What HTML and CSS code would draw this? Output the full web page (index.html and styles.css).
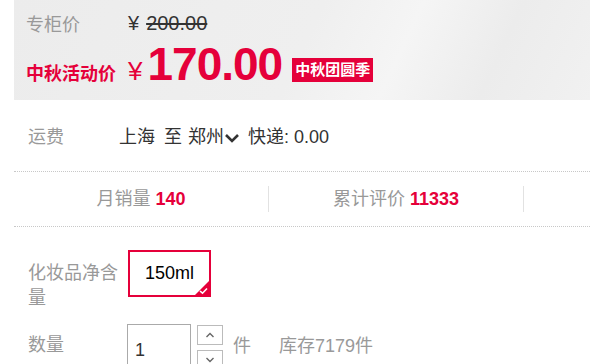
FILE: index.html
```
<!DOCTYPE html>
<html lang="zh-CN">
<head>
  <meta charset="UTF-8">
  <meta name="viewport" content="width=device-width, initial-scale=1.0">
  <title>商品详情</title>
  <link rel="stylesheet" href="styles.css">
</head>
<body>
  <div class="detail">
    <!-- Price box -->
    <div class="price-box">
      <div class="price-row">
        <span class="label">专柜价</span>
        <span class="yen-small">¥</span><del class="old-price">200.00</del>
      </div>
      <div class="promo-row">
        <span class="label promo-label">中秋活动价</span>
        <span class="yen-big">¥</span>
        <span class="promo-price">170.00</span>
        <span class="promo-tag">中秋团圆季</span>
      </div>
    </div>

    <!-- Freight -->
    <div class="freight">
      <span class="meta-label freight-label">运费</span>
      <span class="freight-value">
        <span class="from">上海</span><span class="to">至</span><span>郑州</span>
        <svg class="chevron" width="16" height="10" viewBox="0 0 16 10"><polyline points="2,2 8,8 14,2" fill="none" stroke="#333" stroke-width="2.6"/></svg>
        <span>快递:</span><span class="fee">0.00</span>
      </span>
    </div>

    <!-- Stats -->
    <div class="stats">
      <div class="stat">月销量 <em>140</em></div>
      <div class="stat">累计评价 <em>11333</em></div>
    </div>

    <!-- SKU -->
    <div class="sku-row">
      <span class="meta-label sku-label">化妆品净含量</span>
      <div class="sku-option">
        150ml
        <svg class="sku-check" width="14" height="14" viewBox="0 0 14 14"><polygon points="14,0 14,14 0,14" fill="#e5003a"/><polyline points="5,10 7.5,12.2 12,7.5" fill="none" stroke="#fff" stroke-width="1.6"/></svg>
      </div>
    </div>

    <!-- Amount -->
    <div class="amount-row">
      <span class="meta-label amount-label">数量</span>
      <div class="amount-input">1</div>
      <div class="amount-btns">
        <div class="amount-btn"><svg width="10" height="6" viewBox="0 0 10 6"><polyline points="1.5,5 5,1.5 8.5,5" fill="none" stroke="#666" stroke-width="1.4"/></svg></div>
        <div class="amount-btn"><svg width="10" height="6" viewBox="0 0 10 6"><polyline points="1.5,1 5,4.5 8.5,1" fill="none" stroke="#666" stroke-width="1.4"/></svg></div>
      </div>
      <span class="unit">件</span>
      <span class="stock">库存7179件</span>
    </div>
  </div>
</body>
</html>
```

FILE: styles.css
```
/* General */
body {
  margin: 0;
  padding: 0;
  overflow: hidden;
  background: #fff;
  font-family: "Liberation Sans", "Noto Sans CJK SC", sans-serif;
  font-size: 18px;
  color: #333;
}

.detail {
  padding-left: 14px;
  overflow: hidden;
}

/* Price box */
.price-box {
  height: 100px;
  box-sizing: border-box;
  padding: 6px 0 0 12px;
  background: linear-gradient(115deg, #ececec 0%, #efefef 50%, #f5f5f5 66%, #ececec 82%, #f1f1f1 100%);
}

.price-row {
  display: flex;
  align-items: center;
  height: 34px;
}

.label {
  width: 102px;
  flex-shrink: 0;
  color: #999;
}

.yen-small {
  font-size: 20px;
  color: #333;
  margin-right: 7px;
}

.old-price {
  font-size: 20px;
  color: #333;
  text-decoration: line-through;
}

.promo-row {
  display: flex;
  align-items: baseline;
  height: 46px;
  margin-top: 1px;
}

.promo-label {
  color: #e5003a;
  font-weight: bold;
}

.yen-big {
  font-size: 26px;
  color: #e5003a;
  margin-right: 5px;
}

.promo-price {
  font-size: 46px;
  line-height: 46px;
  font-weight: bold;
  letter-spacing: -1px;
  color: #e5003a;
}

.promo-tag {
  align-self: flex-end;
  margin: 0 0 5px 10px;
  padding: 0 3px;
  height: 24px;
  line-height: 24px;
  font-size: 15px;
  font-weight: bold;
  color: #fff;
  background: #e5003a;
}

/* Meta rows */
.meta-label {
  flex-shrink: 0;
  color: #999;
}

.freight {
  display: flex;
  padding: 24px 0 21px 14px;
  line-height: 26px;
}

.freight-label {
  width: 91px;
}

.freight-value {
  display: flex;
  align-items: center;
  color: #333;
}

.freight-value .from {
  margin-right: 9px;
}

.freight-value .to {
  margin-right: 6px;
}

.chevron {
  margin: 1px 8px 0 0;
}

.fee {
  margin-left: 5px;
}

/* Stats */
.stats {
  display: flex;
  align-items: center;
  height: 54px;
  border-top: 1px dotted #c8c8c8;
  border-bottom: 1px dotted #c8c8c8;
}

.stat {
  width: 255px;
  flex-shrink: 0;
  box-sizing: border-box;
  height: 26px;
  line-height: 26px;
  text-align: center;
  color: #999;
  border-right: 1px solid #e2e2e2;
}

.stat em {
  font-style: normal;
  font-weight: bold;
  color: #e5003a;
}

/* SKU */
.sku-row {
  display: flex;
  align-items: flex-start;
  margin-top: 23px;
  padding-left: 14px;
}

.sku-label {
  width: 100px;
  padding-top: 11px;
  line-height: 25px;
}

.sku-option {
  position: relative;
  width: 83px;
  height: 47px;
  box-sizing: border-box;
  border: 2px solid #e5003a;
  line-height: 43px;
  text-align: center;
  color: #000;
}

.sku-check {
  position: absolute;
  right: 0;
  bottom: 0;
}

/* Amount */
.amount-row {
  display: flex;
  align-items: flex-start;
  margin-top: 13px;
  padding-left: 14px;
}

.amount-label {
  width: 99px;
  padding-top: 9px;
  line-height: 25px;
}

.amount-input {
  width: 64px;
  height: 52px;
  box-sizing: border-box;
  border: 1px solid #aaa;
  padding-left: 7px;
  line-height: 50px;
  color: #333;
}

.amount-btns {
  display: flex;
  flex-direction: column;
  gap: 5px;
  margin: 1px 0 0 6px;
}

.amount-btn {
  width: 26px;
  height: 20px;
  box-sizing: border-box;
  border: 1px solid #bbb;
  display: flex;
  align-items: center;
  justify-content: center;
}

.unit,
.stock {
  padding-top: 10px;
  line-height: 25px;
  color: #999;
}

.unit {
  margin-left: 10px;
}

.stock {
  margin-left: 28px;
}
```
